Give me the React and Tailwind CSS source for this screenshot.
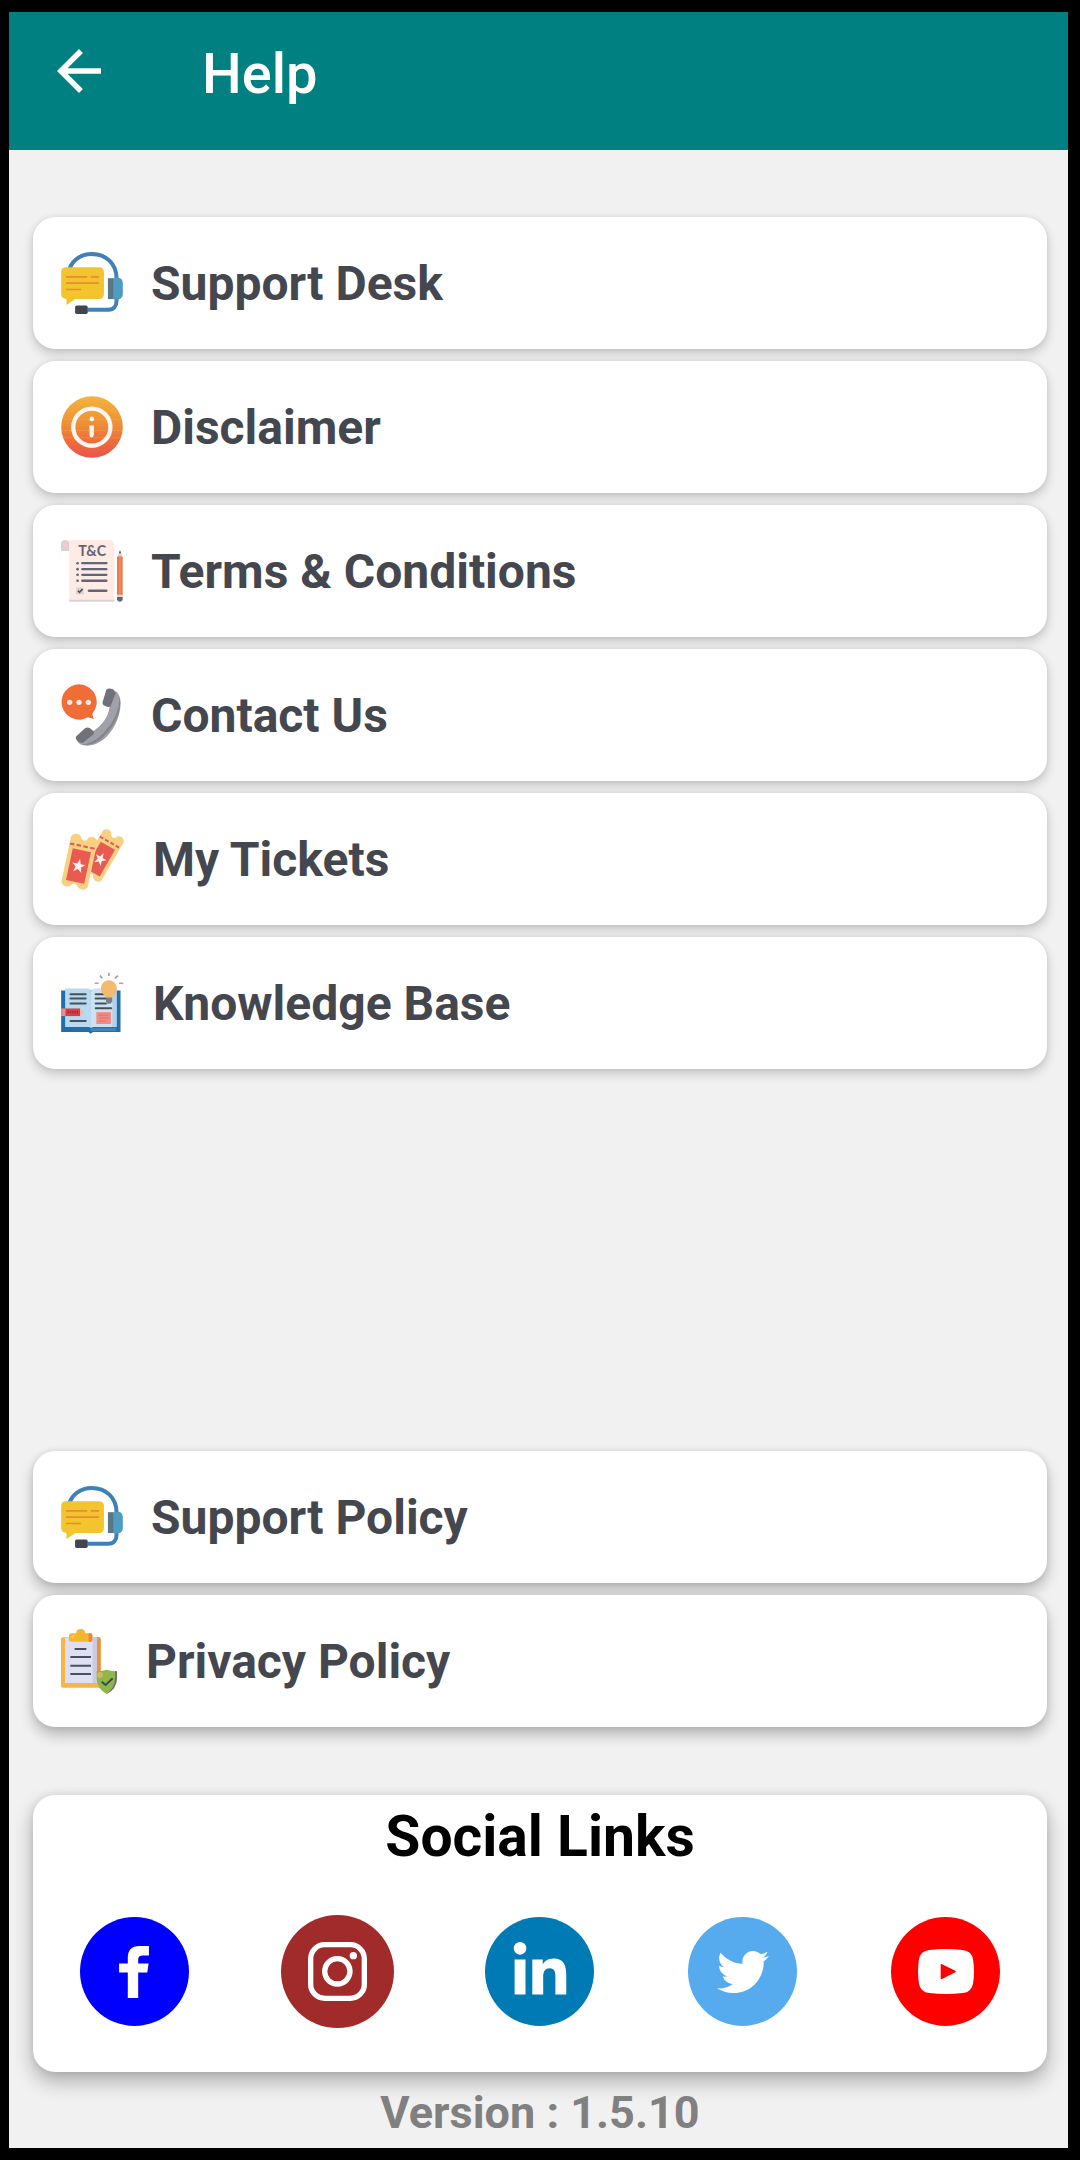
import React from "react";
import { FaLinkedinIn, FaTwitter } from "react-icons/fa";

function HeadsetIcon() {
  return (
    <svg viewBox="93 125 186 187" className="h-[62px] w-[62px]" aria-hidden="true">
      <path d="M117 178C126 150 152 131 185 131C228 131 260 160 260 205V272C260 289 251 299 236 299H172" fill="none" stroke="#3f80b7" strokeWidth="12" />
      <path d="M234 204H252V267H234Z" fill="#5a7787" />
      <path d="M252 203H266Q279 205 279 220V251Q279 265 266 268H252Z" fill="#4e9dc0" />
      <path d="M107 171H207Q222 171 222 186V252Q222 267 207 267H136L109 285V267Q93 265 93 252V186Q93 171 107 171Z" fill="#f2c42d" />
      <path d="M108 200H172M182 200H207M108 219H207M108 238H153" stroke="#ea8a35" strokeWidth="5" />
      <rect x="135" y="286" width="38" height="26" rx="5" fill="#43454e" />
    </svg>
  );
}

function InfoIcon() {
  return (
    <svg viewBox="93 77 187 187" className="h-[62px] w-[62px]" aria-hidden="true">
      <defs>
        <linearGradient id="info-fill" x1="0" y1="0" x2="0" y2="1">
          <stop offset="0" stopColor="#f3b53e" />
          <stop offset="0.45" stopColor="#ee8f38" />
          <stop offset="0.75" stopColor="#ee6a3a" />
          <stop offset="1" stopColor="#e9544f" />
        </linearGradient>
      </defs>
      <circle cx="186.500" cy="170.500" r="93" fill="url(#info-fill)" />
      <path d="M107 124H266M97 147H275M94 181H279M98 203H275" stroke="#f6b04a" strokeWidth="2" opacity="0.55" />
      <circle cx="186" cy="171" r="56" fill="none" stroke="#fff6ef" strokeWidth="13" />
      <circle cx="186" cy="146" r="7" fill="#fff6ef" />
      <path d="M178 166H192V195Q192 202 185 202Q179 202 179 195V175Q178 171 178 166Z" fill="#fff6ef" />
    </svg>
  );
}

function TermsIcon() {
  return (
    <svg viewBox="93 90 187 187" className="h-[62px] w-[62px]" aria-hidden="true">
      <path d="M93 123V104Q93 90 106 90Q118 90 118 104V123Z" fill="#dccfd2" />
      <path d="M99 112V104Q100 96 107 96Q113 96 113 104V116H99Z" fill="#f3cdc4" />
      <path d="M106 90H240Q254 92 254 106V271H118V104Q118 92 106 90Z" fill="#fdebe4" />
      <path d="M118 270H254V276H118Z" fill="#d9d2d5" />
      <text x="187" y="138" textAnchor="middle" fontFamily="Lato, sans-serif" fontWeight="700" fontSize="43" fill="#62657a">T&amp;C</text>
      <path d="M157 160H230M157 178H230M157 195H230M157 213H230M177 243H230" stroke="#62657a" strokeWidth="7" strokeLinecap="round" />
      <g fill="#62657a">
        <circle cx="143" cy="160" r="4" />
        <circle cx="143" cy="178" r="4" />
        <circle cx="143" cy="195" r="4" />
        <circle cx="143" cy="213" r="4" />
      </g>
      <rect x="139" y="233" width="22" height="21" fill="#d8d0d5" />
      <path d="M144 243L149 248L158 238" fill="none" stroke="#4c4f60" strokeWidth="5" />
      <path d="M262 141L271 121L279 141Z" fill="#e6d2cb" />
      <path d="M267 130L271 121L275 130Z" fill="#55586a" />
      <path d="M262 140H279V256H262Z" fill="#ea7555" />
      <path d="M267 140H274V256H267Z" fill="#f08a52" />
      <path d="M262 255H279V262H262Z" fill="#d5d5da" />
      <path d="M262 262H279V270Q276 276 271 276Q264 276 262 270Z" fill="#62657a" />
    </svg>
  );
}

function PhoneIcon() {
  return (
    <svg viewBox="93 97 186 186" className="h-[62px] w-[62px]" aria-hidden="true">
      <path d="M147 98A53 53 0 1 0 174 197L191 202L187 186A53 53 0 0 0 147 98Z" fill="#f16d38" />
      <g fill="#ffece2">
        <circle cx="119" cy="152" r="8" />
        <circle cx="147" cy="152" r="8" />
        <circle cx="175" cy="152" r="8" />
      </g>
      <path d="M247 113Q272 124 272 155C270 221 223 283 171 282Q148 282 142 268L183 243C216 221 234 198 239 165Z" fill="#a0a0a7" />
      <path d="M268 134Q281 193 222 254Q189 286 155 279Q190 276 221 244Q271 189 268 134Z" fill="#85858d" />
      <path d="M229 114Q236 108 249 113L257 124L242 164Q238 167 231 165L221 161Q216 157 218 150Z" fill="#70717b" />
      <path d="M139 254L165 230Q172 225 179 229L190 238Q194 243 191 247L158 274Q142 271 138 262Q136 258 139 254Z" fill="#70717b" />
    </svg>
  );
}

function Ticket() {
  return (
    <>
      <path d="M-39 -66C-35 -80 -12 -82 -8 -66C-3 -61 3 -61 8 -66C12 -82 35 -80 39 -66V66C35 80 12 80 8 68C3 62 -3 62 -8 68C-12 80 -35 80 -39 66Z" fill="#f8d084" />
      <path d="M-38 -46H38" stroke="#e35a50" strokeWidth="6" strokeDasharray="13 7" />
      <path d="M-27 -34H27V59H-27Z" fill="#e95b50" />
      <path d="M0 -9L5 6H20L8 15L12 30L0 21L-12 30L-8 15L-20 6H-5Z" fill="#fff1ee" />
    </>
  );
}

function TicketsIcon() {
  return (
    <svg viewBox="93 110 192 187" className="h-[62px] w-[64px]" aria-hidden="true">
      <g transform="translate(217 193) rotate(30) scale(0.920 1)">
        <Ticket />
      </g>
      <g transform="translate(148 212) rotate(12) scale(1.040 1.050)">
        <Ticket />
      </g>
    </svg>
  );
}

function BookIcon() {
  return (
    <svg viewBox="93 107 192 187" className="h-[62px] w-[64px]" aria-hidden="true">
      <path d="M93 163H272V288H189L182 293L175 288H93Z" fill="#216ea8" />
      <path d="M105 157H173Q183 158 183 168V276Q180 273 173 273H105Z" fill="#b9d9f0" />
      <path d="M183 168Q184 157 194 157H260V273H193Q185 273 183 276Z" fill="#cbe2f3" />
      <path d="M247 165H260V273H247Z" fill="#b3d2ea" />
      <path d="M182 276H258V285H182Z" fill="#3c86bc" />
      <path d="M121 174H167M121 187H167M121 202H167M121 255H167M197 174H220M197 187H228M197 202H228M197 216H244" stroke="#46515c" strokeWidth="6" strokeLinecap="round" />
      <path d="M93 217H108V240H93Z" fill="#ee8c80" />
      <path d="M106 217H150V240H106Z" fill="#d73f45" />
      <path d="M112 228H148" stroke="#a92b38" strokeWidth="9" strokeDasharray="4 3" />
      <path d="M150 217L162 229L150 240Z" fill="#f1b8a3" />
      <path d="M199 228H243V264H199Z" fill="#ef8c82" />
      <path d="M207 237H235M207 246H235M207 255H229" stroke="#df716e" strokeWidth="3" />
      <path d="M237 132C222 132 213 144 213 157C213 169 222 176 229 185H246C252 176 261 169 261 157C261 144 251 132 237 132Z" fill="#f2bb6d" />
      <path d="M228 184H247V195L242 203H233L228 195Z" fill="#74818b" />
      <path d="M194 141H206M268 141H280M237 109V119" stroke="#dc9188" strokeWidth="5" />
      <path d="M210 118L217 126M264 118L255 126" stroke="#a69a95" strokeWidth="5" />
    </svg>
  );
}

function ClipboardIcon() {
  return (
    <svg viewBox="93 84 171 195" className="h-[65px] w-[57px]" aria-hidden="true">
      <path d="M98 109H207Q212 109 212 115V260H99Q93 260 93 254V115Q93 109 98 109Z" fill="#f6b547" />
      <path d="M201 109H207Q212 109 212 115V220H201Z" fill="#ea9141" />
      <path d="M105 111H194V246H105Z" fill="#dedff0" />
      <path d="M188 111H201V246H188Z" fill="#cacbe0" />
      <path d="M124 97H138Q139 84 152 84Q165 84 166 97H182Q187 97 187 103V116Q187 122 182 122H124Q117 122 117 116V103Q117 97 124 97Z" fill="#f4b62f" />
      <path d="M176 97H182Q187 98 187 103V116Q187 122 182 122H176Z" fill="#ed823b" />
      <path d="M124 107Q126 101 134 103L128 113Z" fill="#fbd678" />
      <path d="M134 144H169M121 168H183M121 194H183M121 219H183" stroke="#4b4e60" strokeWidth="6" />
      <path d="M230 206Q215 211 200 211V232Q201 264 230 279Q260 264 261 232V211Q245 211 230 206Z" fill="#8fb64b" />
      <path d="M255 211H261V232Q260 264 230 279Q255 259 255 232Z" fill="#6c7173" />
      <circle cx="210" cy="222" r="9" fill="#d6b65b" />
      <path d="M215 242L227 252L248 232" fill="none" stroke="#3e4b48" strokeWidth="6" />
    </svg>
  );
}

function FacebookGlyph() {
  return (
    <svg viewBox="0 0 89 155" className="h-[52px] w-[30px]" fill="white" aria-hidden="true">
      <path d="M26 155V79H0V52H26V36C26 12 38 0 60 0H89V28H71C61 28 57 32 57 40V52H88L84 79H57V155Z" />
    </svg>
  );
}

function InstagramGlyph() {
  return (
    <svg viewBox="0 0 177 177" className="h-[59px] w-[59px]" aria-hidden="true">
      <rect x="8" y="8" width="161" height="161" rx="42" fill="none" stroke="white" strokeWidth="16" />
      <circle cx="88" cy="88" r="38" fill="none" stroke="white" strokeWidth="16" />
      <circle cx="136" cy="41" r="11" fill="white" />
    </svg>
  );
}

function YoutubeGlyph() {
  return (
    <svg viewBox="0 0 168 135" className="h-[45px] w-[56px]" aria-hidden="true">
      <path d="M34 3Q84 -3 134 3Q161 6 165 31Q171 67 165 104Q161 129 134 132Q84 138 34 132Q7 129 3 104Q-3 67 3 31Q7 6 34 3Z" fill="white" />
      <path d="M68 48Q68 44 72 46L112 65Q116 68 112 70L72 90Q68 92 68 88Z" fill="#fe0000" />
    </svg>
  );
}

const helpItems = [
  { label: "Support Desk", Icon: HeadsetIcon },
  { label: "Disclaimer", Icon: InfoIcon },
  { label: "Terms & Conditions", Icon: TermsIcon },
  { label: "Contact Us", Icon: PhoneIcon },
  { label: "My Tickets", Icon: TicketsIcon },
  { label: "Knowledge Base", Icon: BookIcon },
];

const policyItems = [
  { label: "Support Policy", Icon: HeadsetIcon },
  { label: "Privacy Policy", Icon: ClipboardIcon },
];

const socialLinks = [
  { name: "Facebook", disc: "size-[109px] bg-[#0000fe]", glyph: <FacebookGlyph /> },
  { name: "Instagram", disc: "size-[113px] bg-[#a12a2a]", glyph: <InstagramGlyph /> },
  { name: "LinkedIn", disc: "size-[109px] bg-[#007ab5]", glyph: <FaLinkedinIn className="size-[60px]" /> },
  { name: "Twitter", disc: "size-[109px] bg-[#56abef]", glyph: <FaTwitter className="size-[52px]" /> },
  { name: "YouTube", disc: "size-[109px] bg-[#fe0000]", glyph: <YoutubeGlyph /> },
];

function MenuCard({ label, Icon, raised }) {
  const shadow = raised
    ? "shadow-[0_8px_14px_rgba(0,0,0,0.24),0_0_6px_rgba(0,0,0,0.10)]"
    : "shadow-[0_5px_11px_rgba(0,0,0,0.18),0_0_5px_rgba(0,0,0,0.08)]";
  return (
    <li>
      <button type="button" className={`flex w-full items-center gap-7 rounded-[22px] bg-white px-7 py-[33px] text-left ${shadow}`}>
        <span className="flex h-[65px] shrink-0 items-center">
          <Icon />
        </span>
        <span className="pt-[2px] text-[48px] leading-[64px] font-bold text-[#45474f]">{label}</span>
      </button>
    </li>
  );
}

function MenuList({ items, raised }) {
  return (
    <ul className="flex flex-col gap-3">
      {items.map((item) => (
        <MenuCard key={item.label} {...item} raised={raised} />
      ))}
    </ul>
  );
}

export default function App() {
  return (
    <div className="flex min-h-screen flex-col border-y-12 border-r-12 border-l-9 border-black bg-[#f1f1f1] font-[Roboto,sans-serif]">
      <header className="flex items-center gap-[90px] bg-[#008080] pt-[26px] pb-[46px] pl-[37px] text-white">
        <button type="button" aria-label="Back">
          <svg viewBox="0 0 24 24" className="size-[66px]" fill="currentColor" aria-hidden="true">
            <path d="M20 11H7.830l5.590-5.590L12 4l-8 8 8 8 1.410-1.410L7.830 13H20v-2z" />
          </svg>
        </button>
        <h1 className="pt-[6px] text-[56px] leading-[60px] font-medium">Help</h1>
      </header>

      <main className="flex flex-1 flex-col pt-[67px] pr-[21px] pl-6">
        <MenuList items={helpItems} />

        <div className="mt-auto pt-16">
          <MenuList items={policyItems} raised />
        </div>

        <section className="mt-[68px] rounded-[22px] bg-white pt-[10px] pb-11 shadow-[0_10px_20px_rgba(0,0,0,0.28),0_0_8px_rgba(0,0,0,0.10)]">
          <h2 className="text-center text-[57px] leading-[64px] font-bold text-black">Social Links</h2>
          <ul className="mt-[46px] flex items-center">
            {socialLinks.map(({ name, disc, glyph }) => (
              <li key={name} className="flex flex-1 justify-center">
                <a href="#" aria-label={name} className={`flex items-center justify-center rounded-full text-white ${disc}`}>
                  {glyph}
                </a>
              </li>
            ))}
          </ul>
        </section>

        <p className="pt-[13px] pb-[7px] text-center text-[45px] leading-[56px] font-bold text-[#808080]">Version : 1.5.10</p>
      </main>
    </div>
  );
}
